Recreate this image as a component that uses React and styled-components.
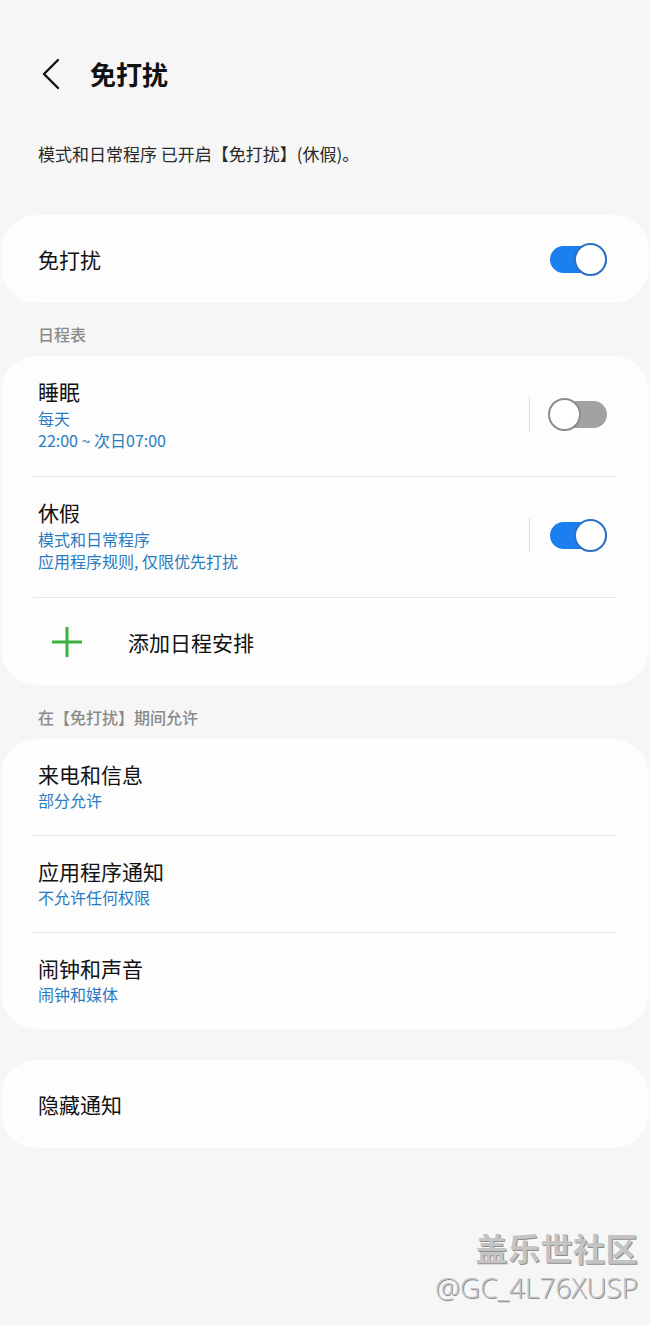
import React from 'react'
import styled, { createGlobalStyle } from 'styled-components'

const blue = '#2a7cc2'
const ink = '#111111'
const gray = '#8a8a8a'
const cardBg = '#fdfdfd'
const pageBg = '#f6f6f6'

const GlobalStyle = createGlobalStyle`
  html, body {
    margin: 0;
    padding: 0;
    background: ${pageBg};
  }
  body {
    font-family: "Noto Sans CJK SC", "Noto Sans", sans-serif;
    color: ${ink};
  }
`

const Page = styled.div`
  position: relative;
  min-height: 1325px;
  padding: 0 1px;
  box-sizing: border-box;
  display: flex;
  flex-direction: column;
`

const Header = styled.header`
  display: flex;
  align-items: center;
  height: 44px;
  margin-top: 52px;
  padding-left: 40px;
  gap: 29px;
`

const Title = styled.h1`
  margin: 0;
  font-size: 26px;
  font-weight: 700;
  line-height: 32px;
`

const Intro = styled.p`
  margin: 46px 0 0;
  padding-left: 37px;
  font-size: 17px;
  line-height: 24px;
  color: #2a2a2a;
`

const Card = styled.section`
  background: ${cardBg};
  border-radius: 36px;
  margin-top: ${({ gap }) => gap}px;
  overflow: hidden;
`

const SectionLabel = styled.div`
  margin-top: ${({ gap }) => gap}px;
  padding-left: 37px;
  font-size: 16px;
  line-height: 22px;
  font-weight: 500;
  color: ${gray};
`

const Row = styled.div`
  display: flex;
  align-items: center;
  justify-content: space-between;
  box-sizing: border-box;
  min-height: ${({ height }) => height}px;
  padding: ${({ pad }) => pad || '0 42px 0 37px'};
`

const Info = styled.div`
  display: flex;
  flex-direction: column;
`

const RowTitle = styled.div`
  font-size: 21px;
  line-height: 28px;
  font-weight: 400;
  color: ${ink};
`

const Sub = styled.div`
  font-size: 16px;
  line-height: 22px;
  color: ${blue};
  margin-top: ${({ gap }) => gap || 0}px;
`

const Divider = styled.div`
  height: 1px;
  margin: 0 32px;
  background: #e7e7e7;
`

const Controls = styled.div`
  display: flex;
  align-items: center;
  gap: 20px;
`

const VLine = styled.div`
  width: 1px;
  height: 35px;
  background: #dcdcdc;
`

const Track = styled.div`
  position: relative;
  width: 57px;
  height: 27px;
  border-radius: 14px;
  background: ${({ on }) => on ? '#1b7ff0' : '#a2a2a2'};
`

const Thumb = styled.div`
  position: absolute;
  top: -3px;
  ${({ on }) => on ? 'right: 0;' : 'left: -2px;'}
  width: 33px;
  height: 33px;
  box-sizing: border-box;
  border-radius: 50%;
  background: #fff;
  border: 2px solid ${({ on }) => on ? '#2c6fc4' : '#8c8c8c'};
`

const AddRow = styled.div`
  display: flex;
  align-items: center;
  height: 87px;
  padding-left: 50px;
  gap: 45px;
  font-size: 21px;
  font-weight: 400;
`

const Watermark = styled.div`
  position: absolute;
  right: 12px;
  bottom: 21px;
  display: flex;
  flex-direction: column;
  align-items: flex-end;
  gap: 4px;
  color: #c4c4c4;
  text-shadow: 1px 1px 0 #8e8e8e;
`

const MarkName = styled.div`
  font-size: 32px;
  line-height: 38px;
  font-weight: 700;
  letter-spacing: 0.5px;
`

const MarkId = styled.div`
  font-family: "Open Sans", "Noto Sans", sans-serif;
  font-size: 28px;
  line-height: 34px;
  font-weight: 300;
`

const Toggle = ({ on }) => (
  <Track on={on}>
    <Thumb on={on} />
  </Track>
)

const BackIcon = () => (
  <svg width='20' height='32' viewBox='0 0 20 32' fill='none'>
    <path d='M17 2 L3 16 L17 30' stroke='#111' strokeWidth='2.4' strokeLinecap='round' strokeLinejoin='round' />
  </svg>
)

const PlusIcon = () => (
  <svg width='32' height='32' viewBox='0 0 32 32'>
    <path d='M16 1 V31 M1 16 H31' stroke='#3bb13f' strokeWidth='3' />
  </svg>
)

const schedules = [
  { name: '睡眠', lines: ['每天', '22:00 ~ 次日07:00'], on: false },
  { name: '休假', lines: ['模式和日常程序', '应用程序规则, 仅限优先打扰'], on: true }
]

const allowed = [
  { name: '来电和信息', sub: '部分允许' },
  { name: '应用程序通知', sub: '不允许任何权限' },
  { name: '闹钟和声音', sub: '闹钟和媒体' }
]

const App = () => (
  <Page>
    <GlobalStyle />
    <Header>
      <BackIcon />
      <Title>免打扰</Title>
    </Header>
    <Intro>模式和日常程序 已开启【免打扰】(休假)。</Intro>

    <Card gap={49}>
      <Row height={88}>
        <RowTitle>免打扰</RowTitle>
        <Toggle on />
      </Row>
    </Card>

    <SectionLabel gap={20}>日程表</SectionLabel>
    <Card gap={11}>
      {schedules.map(s => (
        <React.Fragment key={s.name}>
          <Row height={120} pad='21px 42px 25px 37px'>
            <Info>
              <RowTitle>{s.name}</RowTitle>
              {s.lines.map((l, i) => <Sub key={l} gap={i === 0 ? 2 : 0}>{l}</Sub>)}
            </Info>
            <Controls>
              <VLine />
              <Toggle on={s.on} />
            </Controls>
          </Row>
          <Divider />
        </React.Fragment>
      ))}
      <AddRow>
        <PlusIcon />
        <span>添加日程安排</span>
      </AddRow>
    </Card>

    <SectionLabel gap={21}>在【免打扰】期间允许</SectionLabel>
    <Card gap={11}>
      {allowed.map((a, i) => (
        <React.Fragment key={a.name}>
          {i > 0 && <Divider />}
          <Row height={96} pad='21px 42px 24px 37px'>
            <Info>
              <RowTitle>{a.name}</RowTitle>
              <Sub gap={1}>{a.sub}</Sub>
            </Info>
          </Row>
        </React.Fragment>
      ))}
    </Card>

    <Card gap={31}>
      <Row height={88}>
        <RowTitle>隐藏通知</RowTitle>
      </Row>
    </Card>

    <Watermark>
      <MarkName>盖乐世社区</MarkName>
      <MarkId>@GC_4L76XUSP</MarkId>
    </Watermark>
  </Page>
)

export default App
